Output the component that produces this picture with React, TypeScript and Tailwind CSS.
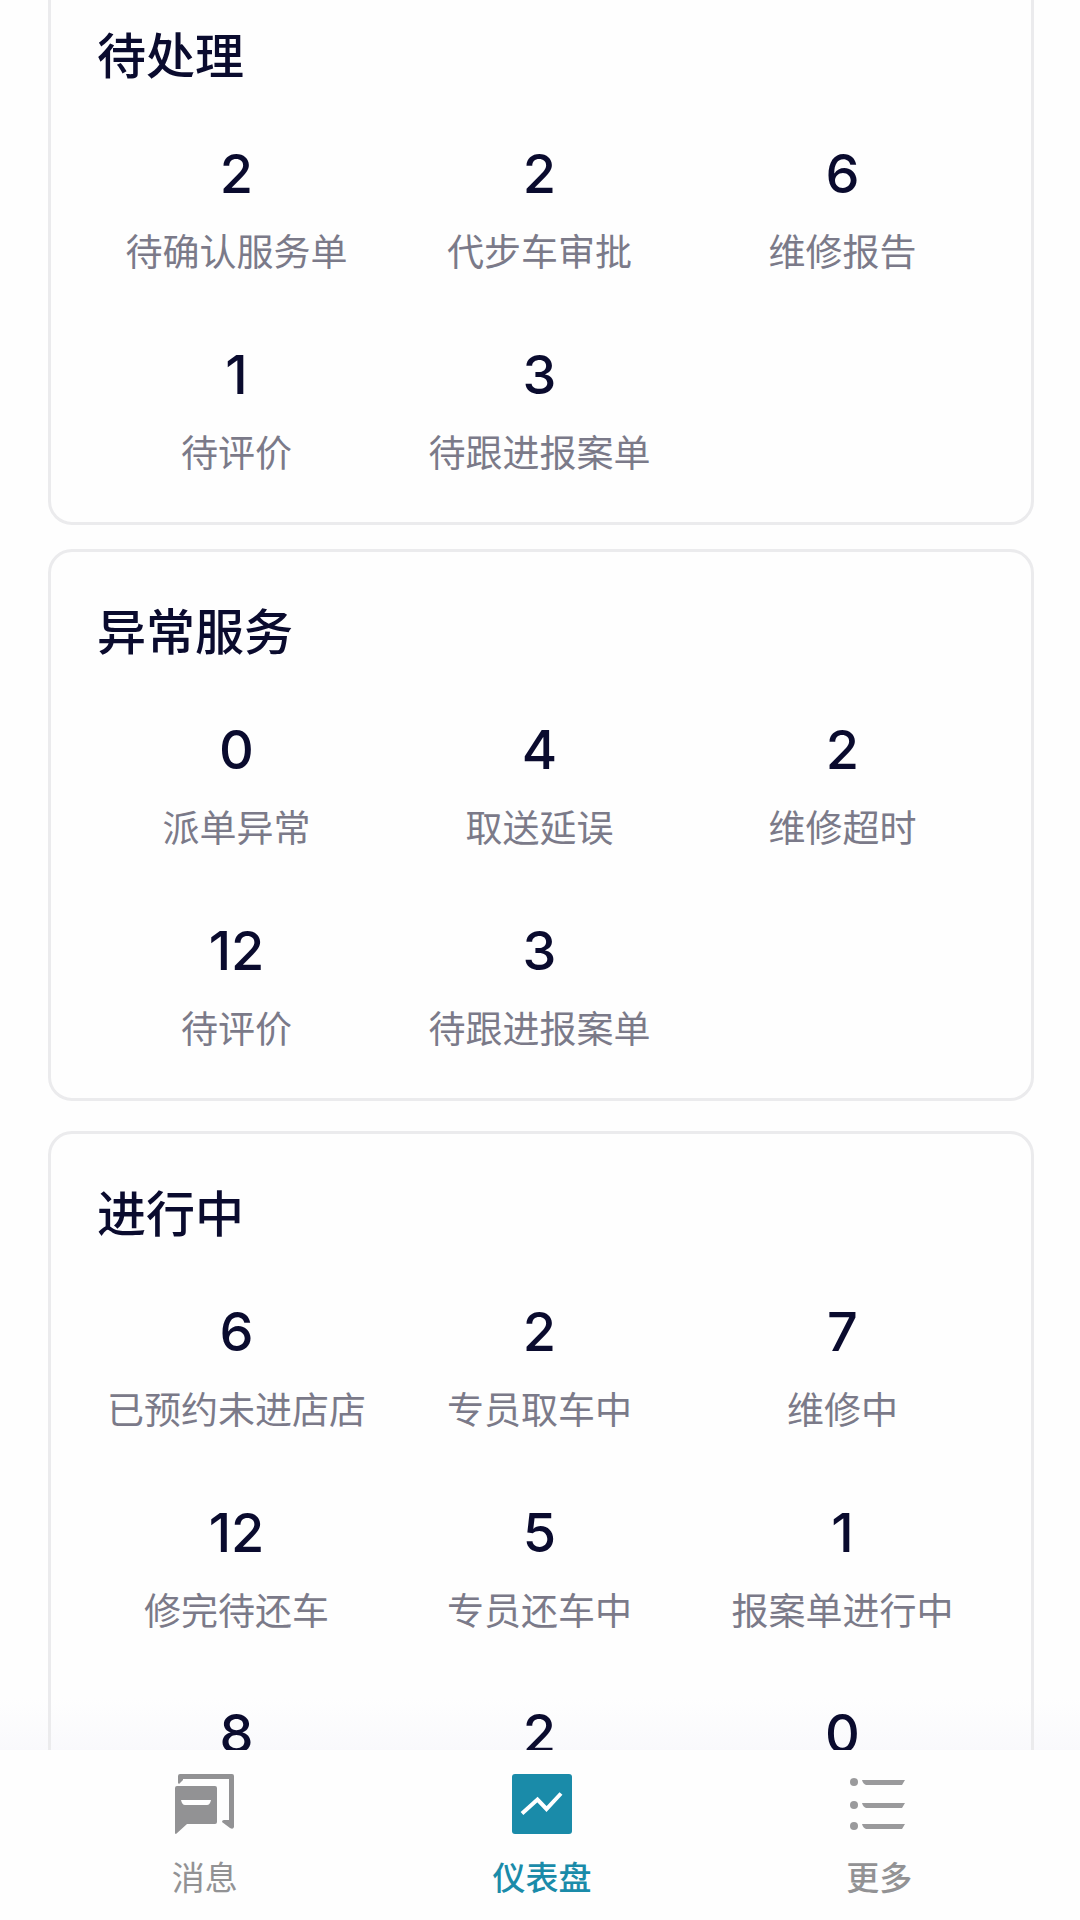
import clsx from "clsx";

type Stat = { value: number; label?: string };

type Props = { title: string; stats: Stat[]; className?: string };

const pending: Stat[] = [
  { value: 2, label: "待确认服务单" },
  { value: 2, label: "代步车审批" },
  { value: 6, label: "维修报告" },
  { value: 1, label: "待评价" },
  { value: 3, label: "待跟进报案单" },
];

const abnormal: Stat[] = [
  { value: 0, label: "派单异常" },
  { value: 4, label: "取送延误" },
  { value: 2, label: "维修超时" },
  { value: 12, label: "待评价" },
  { value: 3, label: "待跟进报案单" },
];

const ongoing: Stat[] = [
  { value: 6, label: "已预约未进店店" },
  { value: 2, label: "专员取车中" },
  { value: 7, label: "维修中" },
  { value: 12, label: "修完待还车" },
  { value: 5, label: "专员还车中" },
  { value: 1, label: "报案单进行中" },
  { value: 8 },
  { value: 2 },
  { value: 0 },
];

function StatCard({ title, stats, className }: Props) {
  return (
    <section
      className={clsx(
        "rounded-3xl border-3 border-[#ebebed] pt-[47px] pr-[37px] pb-[49px] pl-[34px]",
        className
      )}
    >
      <h2 className="pl-3 text-[49px] leading-[60px] font-medium text-[#0a0b2e]">
        {title}
      </h2>
      <ul className="mt-[61px] grid grid-cols-3 gap-y-[73px]">
        {stats.map((stat, i) => (
          <li key={i} className="flex flex-col items-center gap-6">
            <span className="font-['Inter',sans-serif] text-[54px] leading-[60px] font-medium text-[#0a0b2e]">
              {stat.value}
            </span>
            {stat.label && (
              <span className="text-[37px] leading-[44px] whitespace-nowrap text-[#7b7a89]">
                {stat.label}
              </span>
            )}
          </li>
        ))}
      </ul>
    </section>
  );
}

function MessageIcon() {
  return (
    <svg viewBox="0 0 60 60" className="size-15" aria-hidden="true">
      <path
        d="M5 0H57Q59 0 59 2V53Q58 56 55 54L47 48Q47 46 49 46H54V5H8V6L4 10L3 9V2Q3 0 5 0Z"
        fill="#929294"
      />
      <path
        d="M2 12H40Q42 12 42 14V48Q42 50 40 50H12L1 60Q0 60 0 59V14Q0 12 2 12Z"
        fill="#929294"
      />
      <path d="M6 26H36Q35 31 32 31H10Q7 31 6 26Z" fill="#fff" />
    </svg>
  );
}

function DashboardIcon() {
  return (
    <svg viewBox="0 0 60 60" className="size-15" aria-hidden="true">
      <rect width="60" height="60" rx="3" fill="#1a8ba9" />
      <path
        d="M10 39.500L25.500 25.500L34.500 35L49 19.500"
        fill="none"
        stroke="#fff"
        strokeWidth="4"
      />
    </svg>
  );
}

function MoreIcon() {
  return (
    <svg viewBox="0 0 60 60" className="size-15" aria-hidden="true">
      {[8, 31, 52].map((y) => (
        <g key={y} fill="#9a9a9c">
          <circle cx="5" cy={y} r="4" />
          <path d={`M13 ${y - 2}H56L53 ${y + 3}H17Q14 ${y + 2} 13 ${y - 2}Z`} />
        </g>
      ))}
    </svg>
  );
}

export default function App() {
  return (
    <div className="flex h-screen flex-col bg-[#fefefe] font-['Noto_Sans_CJK_SC',sans-serif]">
      <main className="min-h-0 flex-1 overflow-hidden bg-linear-to-t from-[#f9f9fc] to-[#fefefe] to-3%">
        <div className="-mt-[27px] mr-[46px] ml-12">
          <StatCard title="待处理" stats={pending} />
          <StatCard title="异常服务" stats={abnormal} className="mt-6" />
          <StatCard title="进行中" stats={ongoing} className="mt-[30px]" />
        </div>
      </main>
      <nav className="grid grid-cols-3 bg-[#fefefe] pt-6 pr-8 pb-5 pl-9 text-[33px] leading-[48px] text-[#929294]">
        <button className="flex flex-col items-center gap-[18px]">
          <MessageIcon />
          <span>消息</span>
        </button>
        <button
          className="flex flex-col items-center gap-[18px] text-[#1a8ba9]"
          aria-current="page"
        >
          <DashboardIcon />
          <span className="font-medium">仪表盘</span>
        </button>
        <button className="flex flex-col items-center gap-[18px]">
          <MoreIcon />
          <span className="font-medium">更多</span>
        </button>
      </nav>
    </div>
  );
}
